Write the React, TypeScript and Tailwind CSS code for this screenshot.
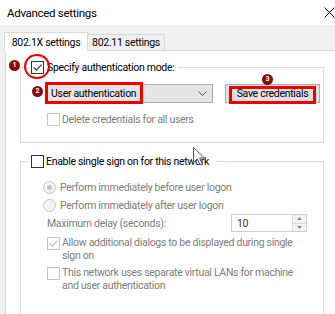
import React from "react";

function Check({ checked = false, disabled = false }: { checked?: boolean; disabled?: boolean }) {
  return (
    <span
      className={
        disabled
          ? "w-[13px] h-[13px] shrink-0 border border-[#c4c4c4] bg-white flex items-center justify-center"
          : "w-[13px] h-[13px] shrink-0 border border-[#333333] bg-white flex items-center justify-center"
      }
    >
      {checked && (
        <svg width="11" height="11" viewBox="0 0 11 11">
          <path
            d="M1.6 5.4 L4.3 8.1 L9.6 2.6"
            fill="none"
            stroke={disabled ? "#c4c4c4" : "#333333"}
            strokeWidth="1.2"
          />
        </svg>
      )}
    </span>
  );
}

function Radio({ selected = false }: { selected?: boolean }) {
  return (
    <span className="w-[13px] h-[13px] shrink-0 rounded-full border border-[#c4c4c4] bg-[#f4f4f4] flex items-center justify-center">
      {selected && <span className="w-[5px] h-[5px] rounded-full bg-[#c4c4c4]" />}
    </span>
  );
}

function Badge({ n, className }: { n: string; className: string }) {
  return (
    <span
      className={
        "absolute w-[11px] h-[11px] rounded-full bg-[#8a0b0b] text-white text-[7px] leading-[11px] font-bold tracking-normal flex items-center justify-center " +
        className
      }
    >
      {n}
    </span>
  );
}

export default function App() {
  return (
    <div className="relative w-[335px] h-[314px] overflow-hidden bg-[#f0f0f0] font-['Roboto',sans-serif] text-[10.5px] tracking-[-0.3px] leading-[13px] text-black whitespace-nowrap">
      {/* Title bar */}
      <div className="h-[25px] bg-white flex items-center justify-between pl-[7px]">
        <span className="text-[11.5px] leading-[14px]">Advanced settings</span>
        <svg width="11" height="11" viewBox="0 0 11 11">
          <path d="M0.5 0.5 L10.5 10.5 M10.5 0.5 L0.5 10.5" stroke="#111" strokeWidth="1" />
        </svg>
      </div>

      {/* Tabs */}
      <div className="flex items-end pl-[4px] h-[25px]">
        <div className="relative z-10 -mb-px h-[19px] w-[84px] bg-white border border-b-0 border-[#d9d9d9] flex items-center justify-center">
          802.1X settings
        </div>
        <div className="h-[16px] w-[77px] border border-b-0 border-l-0 border-[#d9d9d9] flex items-center justify-center">
          802.11 settings
        </div>
      </div>

      {/* Panel */}
      <div className="ml-[5px] h-[264px] bg-white border-l border-t border-[#d9d9d9] pt-[10px]">
        <fieldset className="ml-[14px] w-[304px] border border-[#dcdcdc] pl-[8px] pb-[16px]">
          <legend className="pl-[2px] pr-[4px]">
            <span className="flex items-center h-[13px]">
              <Check checked />
              <span className="ml-[3px]">Specify authentication mode:</span>
            </span>
          </legend>
          <div className="flex items-center mt-[10px] ml-[18px]">
            <div className="w-[166px] h-[19px] bg-[#e5e5e5] border border-[#adadad] flex items-center justify-between pl-[3px] pr-[5px]">
              <span>User authentication</span>
              <svg width="9" height="6" viewBox="0 0 9 6">
                <path d="M0.5 0.5 L4.5 4.5 L8.5 0.5" fill="none" stroke="#555" strokeWidth="1" />
              </svg>
            </div>
            <div className="ml-[12px] w-[95px] h-[19px] bg-[#e1e1e1] border border-[#adadad] flex items-center justify-center">
              Save credentials
            </div>
          </div>
          <div className="flex items-center mt-[10px] ml-[18px] text-[#7d7d7d]">
            <Check disabled />
            <span className="ml-[2px]">Delete credentials for all users</span>
          </div>
        </fieldset>

        <fieldset className="mt-[12px] ml-[14px] w-[304px] border border-[#dcdcdc] pl-[8px] pb-[40px] text-[#7d7d7d]">
          <legend className="pl-[2px] pr-[7px] text-black">
            <span className="flex items-center h-[13px]">
              <Check />
              <span className="ml-[2px]">Enable single sign on for this network</span>
            </span>
          </legend>
          <div className="flex items-center h-[16px] mt-[11px] ml-[14px]">
            <Radio selected />
            <span className="ml-[4px]">Perform immediately before user logon</span>
          </div>
          <div className="flex items-center h-[16px] mt-[2px] ml-[14px]">
            <Radio />
            <span className="ml-[4px]">Perform immediately after user logon</span>
          </div>
          <div className="flex items-center h-[18px] mt-[1px] ml-[18px]">
            <span className="w-[184px]">Maximum delay (seconds):</span>
            <div className="w-[76px] h-[18px] border border-[#cfcfcf] bg-white flex items-center justify-between">
              <span className="pl-[5px] text-[#333]">10</span>
              <div className="flex flex-col h-full w-[14px] border-l border-[#dadada]">
                <div className="flex-1 flex items-center justify-center bg-[#f3f3f3] border-b border-[#dadada]">
                  <svg width="5" height="3" viewBox="0 0 5 3">
                    <path d="M0 3 L2.5 0 L5 3 Z" fill="#8a8a8a" />
                  </svg>
                </div>
                <div className="flex-1 flex items-center justify-center bg-[#f3f3f3]">
                  <svg width="5" height="3" viewBox="0 0 5 3">
                    <path d="M0 0 L2.5 3 L5 0 Z" fill="#8a8a8a" />
                  </svg>
                </div>
              </div>
            </div>
          </div>
          <div className="flex items-start mt-[4px] ml-[18px]">
            <span className="mt-[1px]">
              <Check checked disabled />
            </span>
            <span className="ml-[2px]">
              Allow additional dialogs to be displayed during single
              <br />
              sign on
            </span>
          </div>
          <div className="flex items-start mt-[4px] ml-[18px]">
            <span className="mt-[1px]">
              <Check disabled />
            </span>
            <span className="ml-[2px]">
              This network uses separate virtual LANs for machine
              <br />
              and user authentication
            </span>
          </div>
        </fieldset>
      </div>

      {/* Annotations */}
      <span className="absolute left-[24px] top-[54px] w-[26px] h-[25px] rounded-full border-2 border-[#ee0000]" />
      <span className="absolute left-[45px] top-[82px] w-[98px] h-[22px] border-[3px] border-[#ee0000]" />
      <span className="absolute left-[229px] top-[86px] w-[87px] h-[18px] border-[3px] border-[#ee0000]" />
      <Badge n="1" className="left-[9px] top-[60px]" />
      <Badge n="2" className="left-[32px] top-[86px]" />
      <Badge n="3" className="left-[262px] top-[74px]" />

      {/* Cursor */}
      <svg className="absolute left-[193px] top-[147px]" width="13" height="20" viewBox="0 0 13 20">
        <path
          d="M0.5 0.5 L0.5 15.5 L4.3 11.8 L7 18 L9.2 17 L6.6 11 L11.5 11 Z"
          fill="#ffffff"
          stroke="#555"
          strokeWidth="1"
        />
      </svg>
    </div>
  );
}
